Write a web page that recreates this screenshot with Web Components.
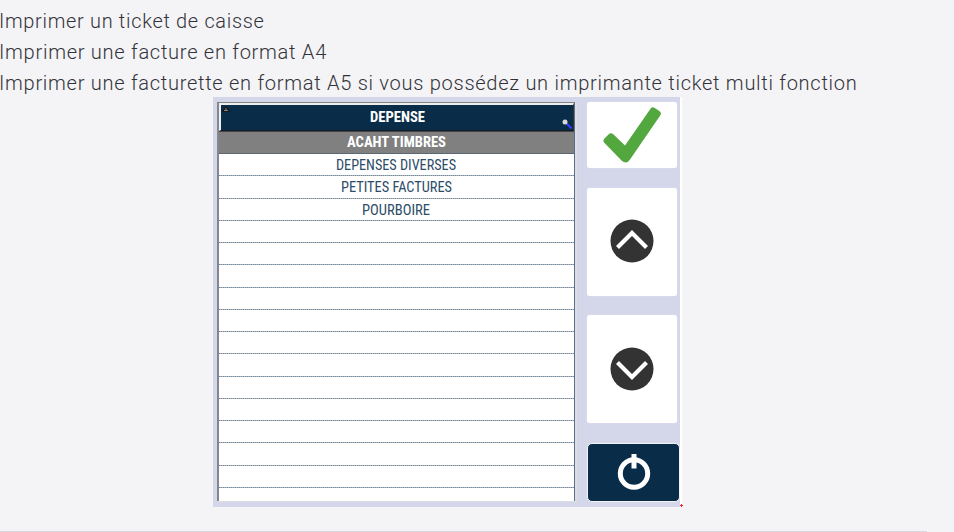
<!DOCTYPE html>
<html lang="fr"><head><meta charset="utf-8"><title>Dépenses</title>
<style>html,body{margin:0;height:532px;overflow:hidden;background:#f4f4f7}</style></head>
<body><receipt-page></receipt-page>
<script>
class FitText extends HTMLElement{
  connectedCallback(){
    const a=n=>this.getAttribute(n),w=+a('width'),h=+a('height'),b=a('baseline');
    this.attachShadow({mode:'open'}).innerHTML=`<style>:host{display:block;width:${w}px;height:${h}px}svg{display:block;overflow:visible}text{fill:currentColor}</style>
    <svg width="${w}" height="${h}"><text x="0" y="${b}" textLength="${w}" lengthAdjust="spacingAndGlyphs"></text></svg>`;
    this.shadowRoot.querySelector('text').textContent=a('label');
  }
}
class ExpenseRow extends HTMLElement{
  connectedCallback(){
    this.attachShadow({mode:'open'}).innerHTML=`<style>
    :host{display:flex;box-sizing:border-box;height:22.27px;flex:none;justify-content:center;color:#2c4c68;padding-right:1px;font:400 15px "Roboto Condensed",Roboto,sans-serif;
      background:repeating-linear-gradient(90deg,#75899a 0 1px,#a9b5c0 1px 2px) left bottom/100% 1px no-repeat}
    :host([selected]){height:23px;background:linear-gradient(#49433f 0 1px,#808080 1px 22px,#596875 22px);color:#fff;font-weight:700}
    </style><slot></slot>`;
  }
}
class ExpenseTable extends HTMLElement{
  connectedCallback(){
    const names=[['DEPENSES DIVERSES',120],['PETITES FACTURES',111],['POURBOIRE',68]];
    const rows=Array.from({length:15},(_,i)=>`<expense-row>${names[i]?`<fit-text label="${names[i][0]}" width="${names[i][1]}" height="20" baseline="15.5"></fit-text>`:''}</expense-row>`).join('');
    this.attachShadow({mode:'open'}).innerHTML=`<style>
    :host{display:flex;flex-direction:column;box-sizing:border-box;width:358px;height:399px;background:#fff;border-left:2px solid #85878c;border-top:1px solid #858585;border-right:1px solid #597188;overflow:hidden;box-shadow:2px 1px 0 #dddde4}
    header{position:relative;box-sizing:border-box;display:flex;justify-content:center;height:28px;flex:none;background:#092c49;border-top:2px solid #eee;border-left:2px solid #eef1f3;border-right:1px solid #333;border-bottom:1px solid #111f2d;color:#fff;font:700 15px "Roboto Condensed",Roboto,sans-serif}
    .sort{position:absolute;left:1px;top:2px}.find{position:absolute;right:0;bottom:1px}
    </style><header><svg class="sort" width="8" height="6"><path d="M0 4 3 0h2l3 4v1H0Z" fill="#17191c"/><path d="M2 3.5h4M3 2h2" stroke="#888" fill="none"/></svg>
    <fit-text label="DEPENSE" width="55" height="24" baseline="17.4"></fit-text>
    <svg class="find" width="12" height="11"><path d="m5.5 5.5 5 5" stroke="#3a3eff" stroke-width="2"/><circle cx="4" cy="4" r="2.5" fill="#d8d8d8"/></svg></header>
    <expense-row selected><fit-text label="ACAHT TIMBRES" width="99" height="22" baseline="16.3"></fit-text></expense-row>${rows}`;
  }
}
class PadButton extends HTMLElement{
  connectedCallback(){
    this.attachShadow({mode:'open'}).innerHTML=`<style>:host{display:flex;box-sizing:border-box;align-items:center;justify-content:center;background:#fff;border-radius:3px;width:90px;box-shadow:0 0 1px #fff}
    :host([dark]){background:#092c49;border:1px solid #f0f1f5;border-radius:5px;width:93px}</style><slot></slot>`;
  }
}
class ReceiptPage extends HTMLElement{
  connectedCallback(){
    const lines=[['Imprimer un ticket de caisse',265.5],['Imprimer une facture en format A4',328],['Imprimer une facturette en format A5 si vous possédez un imprimante ticket multi fonction',858.5]];
    const chev=d=>`<svg width="44" height="44"><circle cx="22" cy="22" r="21.5" fill="#333"/><path d="${d}" fill="none" stroke="#fff" stroke-width="4.2"/></svg>`;
    this.attachShadow({mode:'open'}).innerHTML=`<style>
    :host{display:flex;flex-direction:column;box-sizing:border-box;height:532px;width:954px;padding-top:5px;background:#f4f4f7;overflow:hidden}
    .copy{color:#333337;font:300 20px Roboto,sans-serif;letter-spacing:.7px;height:92px;margin-left:-1px;flex:none}
    .dialog{box-sizing:border-box;margin-left:213px;width:467px;height:410px;flex:none;background:#d4d6e9;padding:5px 0 0 4px;display:flex;gap:12px;box-shadow:2px 0 #fff;position:relative}
    .dialog svg{display:block}
    .pad{display:flex;flex-direction:column;width:93px}
    .dot{position:absolute;left:467px;top:407px}
    footer{margin-top:auto;width:927px;height:1px;background:#d9d9dd}
    </style>
    <div class="copy">${lines.map(l=>`<fit-text label="${l[0]}" width="${l[1]}" height="31" baseline="23"></fit-text>`).join('')}</div>
    <div class="dialog"><expense-table></expense-table><div class="pad">
      <pad-button style="height:66px"><svg width="90" height="66"><path d="M17.5 36.5 21.5 32.5Q24 30 26.5 32.5L38 43.5 63.5 6.8Q65.3 4.3 67.8 6L72.3 9Q75 11 73.2 13.5L43 57.5Q39.5 63 34.5 58.5L17.5 41Q15.3 38.8 17.5 36.5Z" fill="#53a73f"/></svg></pad-button>
      <pad-button style="height:108px;margin-top:19.5px"><div style="margin-top:-1px">${chev('m7.5 28.5 14.5-14.5 14.5 14.5')}</div></pad-button>
      <pad-button style="height:108px;margin-top:19.5px">${chev('m7.5 15.5 14.5 14.5 14.5-14.5')}</pad-button>
      <pad-button dark style="height:59px;margin-top:20px"><svg width="34" height="38"><circle cx="17" cy="19.5" r="13.7" fill="none" stroke="#fff" stroke-width="5"/><path d="M14.5 0h5v14.5h-5Z" fill="#fff"/></svg></pad-button>
    </div><svg class="dot" width="3" height="3"><path d="M0 1h3v1H0ZM1 0h1v3H1Z" style="fill:#ff2030"/></svg></div><footer></footer>`;
  }
}
customElements.define('fit-text',FitText);
customElements.define('expense-row',ExpenseRow);
customElements.define('expense-table',ExpenseTable);
customElements.define('pad-button',PadButton);
customElements.define('receipt-page',ReceiptPage);
</script></body></html>
